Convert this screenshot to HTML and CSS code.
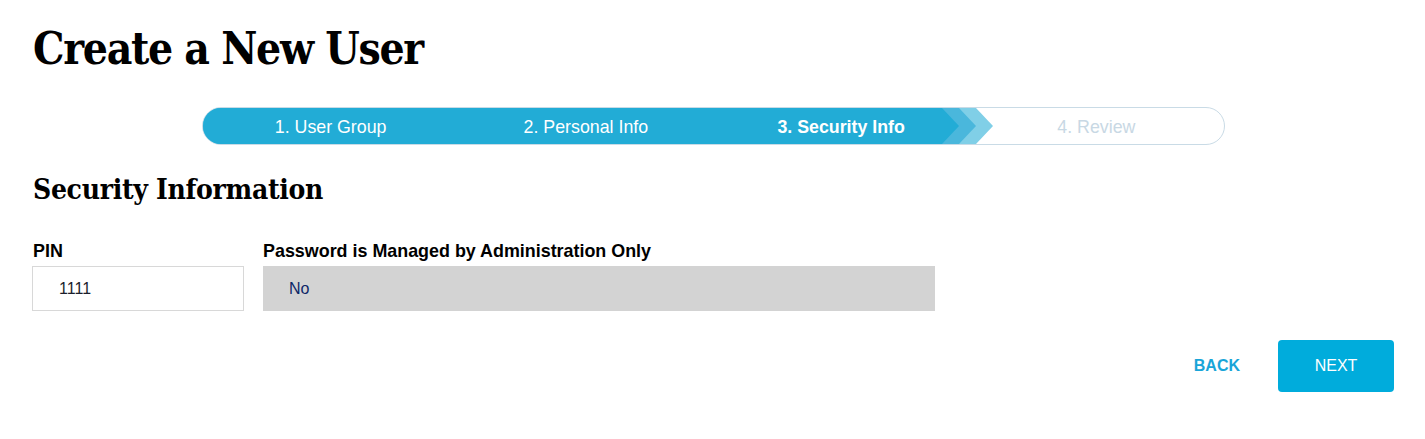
FILE: index.html
```html
<!DOCTYPE html>
<html lang="en">
<head>
  <meta charset="UTF-8" />
  <meta name="viewport" content="width=device-width, initial-scale=1.0" />
  <title>Create a New User</title>
  <link rel="stylesheet" href="styles.css">
</head>
<body>
  <div class="page">
    <h1 class="title">Create a New User</h1>

    <div class="stepper">
      <div class="progress">
        <span class="chev chev-light"></span>
        <span class="chev chev-mid"></span>
        <span class="chev chev-main"></span>
      </div>
      <ol class="steps">
        <li class="done">1. User Group</li>
        <li class="done">2. Personal Info</li>
        <li class="current">3. Security Info</li>
        <li class="todo">4. Review</li>
      </ol>
    </div>

    <h2 class="section-title">Security Information</h2>

    <div class="fields">
      <div class="field field-pin">
        <label>PIN</label>
        <div class="input">1111</div>
      </div>
      <div class="field field-managed">
        <label>Password is Managed by Administration Only</label>
        <div class="input readonly">No</div>
      </div>
    </div>

    <div class="actions">
      <button class="btn-back">BACK</button>
      <button class="btn-next">NEXT</button>
    </div>
  </div>
</body>
</html>
```

FILE: styles.css
```css
body {
  margin: 0;
  font-family: "Liberation Sans", Arial, sans-serif;
  background: #fff;
  color: #000;
}
.page {
  padding: 23px 31px 0 33px;
}
.title {
  font-family: "DejaVu Serif", serif;
  font-stretch: condensed;
  font-weight: bold;
  font-size: 44px;
  line-height: 51px;
  letter-spacing: -1.3px;
  margin: 0;
}
.stepper {
  position: relative;
  width: 1021px;
  height: 36px;
  margin: 33px auto 0;
  border: 1px solid #c9dbe6;
  border-radius: 19px;
  overflow: hidden;
}
.progress {
  position: absolute;
  top: 0;
  left: 0;
  bottom: 0;
  width: 791px;
}
.chev {
  position: absolute;
  top: 0;
  bottom: 0;
  left: 0;
  clip-path: polygon(0 0, calc(100% - 17px) 0, 100% 50%, calc(100% - 17px) 100%, 0 100%);
}
.chev-main {
  width: 756px;
  background: #22acd6;
}
.chev-mid {
  width: 773px;
  background: #4ab7dc;
}
.chev-light {
  width: 790px;
  background: #80cfe7;
}
.steps {
  position: relative;
  display: grid;
  grid-template-columns: repeat(4, 1fr);
  box-sizing: border-box;
  margin: 0;
  padding: 3px 0 0;
  list-style: none;
  height: 100%;
}
.steps li {
  display: flex;
  align-items: center;
  justify-content: center;
  font-size: 17.8px;
  color: #fff;
}
.steps .current {
  font-weight: bold;
}
.steps .todo {
  color: #c8d8e4;
}
.section-title {
  font-family: "DejaVu Serif", serif;
  font-stretch: condensed;
  font-weight: bold;
  font-size: 28px;
  line-height: 36px;
  letter-spacing: -0.3px;
  margin: 27px 0 0;
}
.fields {
  display: flex;
  gap: 19px;
  margin-top: 32px;
}
.field label {
  display: block;
  font-weight: bold;
  font-size: 17.9px;
  line-height: 23px;
  margin-bottom: 3px;
}
.input {
  box-sizing: border-box;
  height: 45px;
  padding: 0 26px;
  display: flex;
  align-items: center;
  font-size: 16px;
  color: #1b1e2c;
  border: 1px solid #d8d8d8;
}
.field-pin .input {
  width: 212px;
  margin-left: -1px;
}
.field-managed .input {
  width: 672px;
}
.input.readonly {
  background: #d3d3d3;
  border-color: #d3d3d3;
  color: #0d2768;
  padding-left: 25px;
}
.actions {
  display: flex;
  justify-content: flex-end;
  align-items: center;
  gap: 38px;
  margin-top: 29px;
}
.actions button {
  font-family: "Liberation Sans", Arial, sans-serif;
  font-size: 16px;
  border: 0;
  cursor: pointer;
}
.btn-back {
  background: none;
  color: #19a5d8;
  font-weight: bold;
  padding: 0;
}
.btn-next {
  width: 116px;
  height: 52px;
  background: #00acdc;
  color: #fff;
  border-radius: 4px;
}
```
